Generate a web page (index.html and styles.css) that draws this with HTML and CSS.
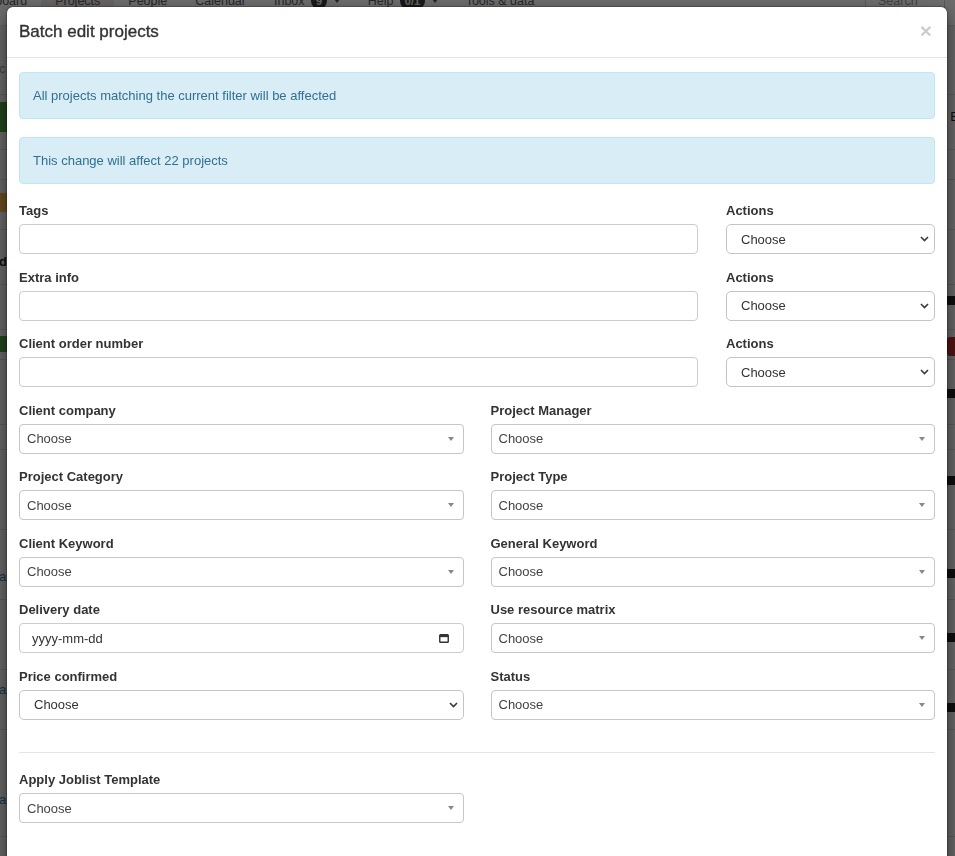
FILE: index.html
```html
<!DOCTYPE html>
<html lang="en">

<head>
    <meta charset="UTF-8">
    <meta name="viewport" content="width=device-width, initial-scale=1.0">
    <title>Batch edit projects</title>
    <link rel="stylesheet" href="styles.css">
</head>

<body>
    <!-- page behind the dialog -->
    <div class="page">
        <div class="navbar">
            <span class="nav-item first">Dashboard</span>
            <span class="nav-item active">Projects</span>
            <span class="nav-item">People</span>
            <span class="nav-item">Calendar</span>
            <span class="nav-item">Inbox <b class="badge">9</b> <i class="caret"></i></span>
            <span class="nav-item">Help <b class="badge">0/1</b> <i class="caret"></i></span>
            <span class="nav-item">Tools &amp; data</span>
            <span class="search">Search</span>
        </div>
        <div class="trow r1"><span class="edge-text grey m34">c</span></div>
        <div class="trow r2"><span class="tag green tall m7"></span><span class="edge-text right m13">E</span></div>
        <div class="trow r3"></div>
        <div class="trow r4"><span class="tag orange m13"></span></div>
        <div class="trow r5"><span class="edge-text dark m23">d</span></div>
        <div class="trow r6"><span></span><span class="icon m11"></span></div>
        <div class="trow r7"><span class="tag green short m6"></span><span class="tag red m7"></span></div>
        <div class="trow r8"><span></span><span class="icon m29"></span></div>
        <div class="trow r9"></div>
        <div class="trow r10"><span></span><span class="icon m26"></span></div>
        <div class="trow r11"><span class="edge-text link m38">a</span><span class="icon m39"></span></div>
        <div class="trow r12"><span></span><span class="icon m33"></span></div>
        <div class="trow r13"><span class="edge-text link m11">a</span><span class="icon m33"></span></div>
        <div class="trow r14"><span class="edge-text link m61">a</span></div>
        <div class="trow r15"></div>
    </div>

    <div class="backdrop"></div>

    <div class="modal">
        <div class="modal-header">
            <h4 class="modal-title">Batch edit projects</h4>
            <span class="close">&times;</span>
        </div>
        <div class="modal-body">
            <div class="alert">All projects matching the current filter will be affected</div>
            <div class="alert">This change will affect 22 projects</div>

            <div class="grid-wide">
                <div class="field">
                    <label>Tags</label>
                    <div class="control"></div>
                </div>
                <div class="field">
                    <label>Actions</label>
                    <div class="control native">Choose<svg width="9" height="6" viewBox="0 0 9 6"><polyline points="1,1 4.5,4.5 8,1" fill="none" stroke="#3a3a3a" stroke-width="1.6"/></svg></div>
                </div>
                <div class="field">
                    <label>Extra info</label>
                    <div class="control"></div>
                </div>
                <div class="field">
                    <label>Actions</label>
                    <div class="control native">Choose<svg width="9" height="6" viewBox="0 0 9 6"><polyline points="1,1 4.5,4.5 8,1" fill="none" stroke="#3a3a3a" stroke-width="1.6"/></svg></div>
                </div>
                <div class="field">
                    <label>Client order number</label>
                    <div class="control"></div>
                </div>
                <div class="field">
                    <label>Actions</label>
                    <div class="control native">Choose<svg width="9" height="6" viewBox="0 0 9 6"><polyline points="1,1 4.5,4.5 8,1" fill="none" stroke="#3a3a3a" stroke-width="1.6"/></svg></div>
                </div>
            </div>

            <div class="grid-half">
                <div class="field">
                    <label>Client company</label>
                    <div class="control s2">Choose<i class="arrow"></i></div>
                </div>
                <div class="field">
                    <label>Project Manager</label>
                    <div class="control s2">Choose<i class="arrow"></i></div>
                </div>
                <div class="field">
                    <label>Project Category</label>
                    <div class="control s2">Choose<i class="arrow"></i></div>
                </div>
                <div class="field">
                    <label>Project Type</label>
                    <div class="control s2">Choose<i class="arrow"></i></div>
                </div>
                <div class="field">
                    <label>Client Keyword</label>
                    <div class="control s2">Choose<i class="arrow"></i></div>
                </div>
                <div class="field">
                    <label>General Keyword</label>
                    <div class="control s2">Choose<i class="arrow"></i></div>
                </div>
                <div class="field">
                    <label>Delivery date</label>
                    <div class="control date">yyyy-mm-dd<svg width="10" height="10" viewBox="0 0 10 10"><rect x="0.75" y="1.75" width="8.5" height="7.5" rx="0.8" fill="none" stroke="#333" stroke-width="1.4"/><rect x="0.75" y="1.75" width="8.5" height="2.4" fill="#333"/></svg></div>
                </div>
                <div class="field">
                    <label>Use resource matrix</label>
                    <div class="control s2">Choose<i class="arrow"></i></div>
                </div>
                <div class="field">
                    <label>Price confirmed</label>
                    <div class="control native">Choose<svg width="9" height="6" viewBox="0 0 9 6"><polyline points="1,1 4.5,4.5 8,1" fill="none" stroke="#3a3a3a" stroke-width="1.6"/></svg></div>
                </div>
                <div class="field">
                    <label>Status</label>
                    <div class="control s2">Choose<i class="arrow"></i></div>
                </div>
            </div>

            <hr>

            <div class="grid-half">
                <div class="field">
                    <label>Apply Joblist Template</label>
                    <div class="control s2">Choose<i class="arrow"></i></div>
                </div>
            </div>
        </div>
    </div>
</body>

</html>
```
FILE: styles.css
```css
* {
    box-sizing: border-box;
}

body {
    margin: 0;
    height: 856px;
    overflow: hidden;
    font-family: "Liberation Sans", Arial, sans-serif;
    font-size: 13px;
    color: #333;
    background: #e4e4e4;
}

/* background page */

.page {
    margin-top: -24px;
}

.navbar {
    display: flex;
    align-items: center;
    height: 50px;
    background: #fafafa;
    border-bottom: 1px solid #ddd;
    font-size: 12.5px;
    color: #5a5a5a;
}

.nav-item {
    padding: 15px 14px;
    line-height: 20px;
    white-space: nowrap;
}

.nav-item.first {
    margin-left: -48px;
}

.nav-item.active {
    background: #ece6e4;
}

.badge {
    display: inline-block;
    padding: 0 5px;
    margin-left: 3px;
    line-height: 16px;
    border-radius: 8px;
    background: #3a3a3a;
    color: #eee;
    font-size: 11px;
}

.caret {
    display: inline-block;
    margin-left: 3px;
    vertical-align: middle;
    border-style: solid;
    border-width: 4px 3px 0;
    border-color: #5a5a5a transparent transparent;
}

.search {
    margin-left: auto;
    margin-right: 10px;
    width: 80px;
    padding: 7px 12px;
    line-height: 18px;
    background: #fff;
    border: 1px solid #ccc;
    border-radius: 4px;
    color: #999;
}

.trow {
    display: flex;
    justify-content: space-between;
    align-items: flex-start;
    border-bottom: 1px solid #cfcfcf;
    background: #e9e9e9;
}

.r1 { height: 69px; }
.r2 { height: 55px; }
.r3 { height: 30px; }
.r4 { height: 50px; }
.r5 { height: 55px; }
.r6 { height: 45px; }
.r7 { height: 30px; }
.r8 { height: 65px; }
.r9 { height: 25px; }
.r10 { height: 80px; }
.r11 { height: 70px; }
.r12 { height: 70px; }
.r13 { height: 60px; }
.r14 { height: 107px; }
.r15 { height: 80px; }

.m6 { margin-top: 6px; }
.m7 { margin-top: 7px; }
.m11 { margin-top: 11px; }
.m13 { margin-top: 13px; }
.m23 { margin-top: 23px; }
.m26 { margin-top: 26px; }
.m29 { margin-top: 29px; }
.m33 { margin-top: 33px; }
.m34 { margin-top: 34px; }
.m38 { margin-top: 38px; }
.m39 { margin-top: 39px; }
.m61 { margin-top: 61px; }

.edge-text {
    line-height: 18px;
    margin-left: -1px;
}

.edge-text.grey {
    color: #999;
}

.edge-text.dark {
    font-weight: bold;
    color: #222;
}

.edge-text.link {
    color: #337ab7;
}

.edge-text.right {
    margin-left: 0;
    margin-right: -4px;
    color: #222;
}

.tag {
    display: block;
    width: 14px;
    height: 19px;
    margin-left: -4px;
    border-radius: 3px;
}

.tag.tall {
    height: 30px;
}

.tag.short {
    height: 16px;
}

.tag.green {
    background: #4f9a3c;
}

.tag.orange {
    background: #f0ad4e;
}

.tag.red {
    margin-left: 0;
    margin-right: -6px;
    background: #b52f2a;
}

.icon {
    display: block;
    width: 14px;
    height: 9px;
    margin-right: -5px;
    background: #222;
    border-radius: 1px;
}

/* dialog */

.backdrop {
    position: fixed;
    inset: 0;
    background: rgba(0, 0, 0, 0.57);
}

.modal {
    position: absolute;
    top: 7px;
    left: 7px;
    width: 940px;
    background: #fff;
    border-radius: 6px;
    box-shadow: 0 0 0 1px rgba(0, 0, 0, 0.2), 0 5px 15px rgba(0, 0, 0, 0.5);
}

.modal-header {
    display: flex;
    align-items: center;
    justify-content: space-between;
    height: 51px;
    padding: 0 15px 0 12px;
    border-bottom: 1px solid #e5e5e5;
}

.modal-title {
    margin: 0;
    font-size: 17px;
    font-weight: normal;
    color: #333;
    -webkit-text-stroke: 0.35px #333;
}

.close {
    margin-top: -4px;
    font-size: 21px;
    font-weight: bold;
    line-height: 1;
    color: #000;
    opacity: 0.2;
}

.modal-body {
    padding: 14px 12px 40px;
}

.alert {
    padding: 13.5px 13px;
    margin-bottom: 18px;
    line-height: 18px;
    color: #31708f;
    background: #d9edf7;
    border: 1px solid #bce8f1;
    border-radius: 4px;
}

.grid-wide {
    display: grid;
    grid-template-columns: 679px 1fr;
    column-gap: 28px;
}

.grid-half {
    display: grid;
    grid-template-columns: 1fr 1fr;
    column-gap: 27px;
}

.field {
    margin-bottom: 14.5px;
}

label {
    display: block;
    margin-bottom: 4px;
    line-height: 18px;
    font-weight: bold;
    color: #333;
}

.control {
    display: flex;
    align-items: center;
    justify-content: space-between;
    height: 30px;
    background: #fff;
    border: 1px solid #ccc;
    border-radius: 4px;
}

.control.native {
    padding: 0 5px 0 14px;
    color: #333;
    border-color: #c4c4c4;
    border-radius: 5px;
}

.control.s2 {
    padding: 0 9px 0 7px;
    color: #444;
    border-color: #c6c6c6;
}

.control.date {
    padding: 0 14px 0 12px;
    color: #333;
}

.arrow {
    border-style: solid;
    border-width: 4px 3px 0;
    border-color: #888 transparent transparent;
}

hr {
    margin: 18px 0;
    border: 0;
    border-top: 1px solid #e5e5e5;
}
```
